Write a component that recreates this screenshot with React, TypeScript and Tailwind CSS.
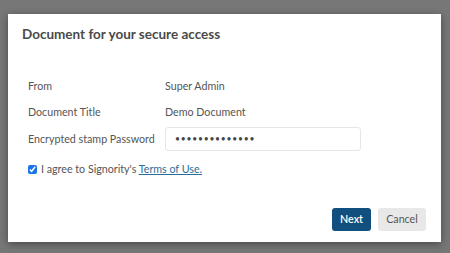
export default function App() {
  return (
    <div className="w-[450px] h-[253px] bg-[#777777] pt-[14px] px-[8px] font-['Lato',sans-serif]">
      <div className="w-[433px] h-[228px] bg-white shadow-[0_2px_8px_rgba(0,0,0,0.4)] flex flex-col">
        <div className="px-[14px] pt-[12px] h-[59px]">
          <h2 className="text-[13.5px] font-bold text-[#4a4a4a] leading-[16px]">Document for your secure access</h2>
        </div>
        <div className="px-[20px] flex flex-col text-[10.7px] text-[#555]">
          <div className="flex items-center h-[26px]">
            <span className="w-[137px]">From</span>
            <span>Super Admin</span>
          </div>
          <div className="flex items-center h-[26px]">
            <span className="w-[137px]">Document Title</span>
            <span>Demo Document</span>
          </div>
          <div className="flex items-center h-[26px] mt-[1px]">
            <span className="w-[137px]">Encrypted stamp Password</span>
            <div className="w-[196px] h-[24px] border border-[#e6e6e6] rounded-[3px] flex items-center px-[9px] text-[#444] text-[8.5px] tracking-[0.8px]">
              ••••••••••••••
            </div>
          </div>
          <label className="flex items-center mt-[8px] h-[18px]">
            <input type="checkbox" defaultChecked className="w-[9px] h-[9px] m-0 mr-[4px] accent-[#1a73e8]" />
            <span>
              I agree to Signority's{' '}
              <a href="#" className="text-[#2a6f97] underline">Terms of Use.</a>
            </span>
          </label>
        </div>
        <div className="flex justify-end gap-[7px] pr-[15px] mt-auto mb-[11px]">
          <button className="h-[23px] w-[39px] rounded-[3px] bg-[#104f7e] text-white text-[10.7px] font-semibold">Next</button>
          <button className="h-[23px] w-[48px] rounded-[3px] bg-[#e8e8e8] text-[#555] text-[10.7px]">Cancel</button>
        </div>
      </div>
    </div>
  );
}
